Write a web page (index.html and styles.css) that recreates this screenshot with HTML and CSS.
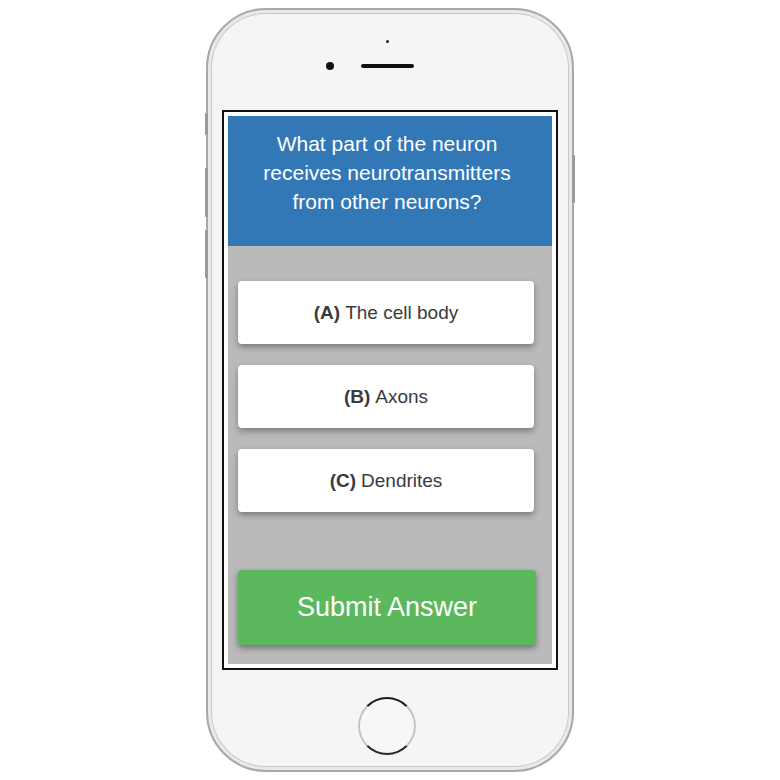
FILE: index.html
```html
<!DOCTYPE html>
<html>
<head>
<meta charset="utf-8">
<link rel="stylesheet" href="styles.css">
</head>
<body>
<div class="phone">
  <span class="side-btn l1"></span>
  <span class="side-btn l2"></span>
  <span class="side-btn l3"></span>
  <span class="side-btn r1"></span>
  <div class="top">
    <span class="sensor"></span>
    <div class="ear-row">
      <span class="camera"></span>
      <span class="speaker"></span>
    </div>
  </div>
  <div class="screen">
    <div class="app">
      <div class="question">What part of the neuron receives neurotransmitters from other neurons?</div>
      <div class="answers">
        <div class="options">
          <div class="option"><b>(A)</b> The cell body</div>
          <div class="option"><b>(B)</b> Axons</div>
          <div class="option"><b>(C)</b> Dendrites</div>
        </div>
        <div class="submit">Submit Answer</div>
      </div>
    </div>
  </div>
  <div class="home"></div>
</div>
</body>
</html>
```
FILE: styles.css
```css
html, body {
  margin: 0;
  padding: 0;
  background: #ffffff;
}
body {
  font-family: "Liberation Sans", Arial, sans-serif;
}
.phone {
  position: relative;
  box-sizing: border-box;
  width: 368px;
  height: 764px;
  margin: 8px auto 0;
  border: 2px solid #a8a8a8;
  border-radius: 60px;
  background: #f4f5f4;
  box-shadow: inset 0 0 0 3px #e9e9e9, inset 0 0 0 4px #c9c9c9;
  display: flex;
  flex-direction: column;
  align-items: center;
}
.side-btn {
  position: absolute;
  width: 3px;
  background: #9a9a9a;
  border-radius: 1px;
}
.l1 { left: -3px; top: 103px; height: 22px; }
.l2 { left: -3px; top: 158px; height: 49px; }
.l3 { left: -3px; top: 220px; height: 48px; }
.r1 { right: -3px; top: 145px; height: 48px; }
.top {
  height: 100px;
  width: 100%;
  display: flex;
  flex-direction: column;
  align-items: center;
}
.sensor {
  width: 3px;
  height: 3px;
  border-radius: 50%;
  background: #222;
  margin-top: 30px;
  margin-left: -6px;
}
.ear-row {
  display: flex;
  align-items: center;
  gap: 27px;
  margin-top: 19px;
  margin-left: -41px;
}
.camera {
  width: 8px;
  height: 8px;
  border-radius: 50%;
  background: #111;
}
.speaker {
  width: 53px;
  height: 4px;
  border-radius: 2px;
  background: #111;
}
.screen {
  box-sizing: border-box;
  width: 336px;
  height: 560px;
  border: 2px solid #111;
  padding: 4px;
  background: #ffffff;
}
.app {
  height: 100%;
  display: flex;
  flex-direction: column;
  background: #bababa;
}
.question {
  height: 130px;
  box-sizing: border-box;
  padding: 13px 27px 0 21px;
  background: #3278b6;
  color: #ffffff;
  font-size: 21px;
  line-height: 29px;
  text-align: center;
}
.answers {
  flex: 1;
  display: flex;
  flex-direction: column;
  padding: 35px 14px 19px 10px;
}
.options {
  display: flex;
  flex-direction: column;
  gap: 21px;
}
.option {
  height: 63px;
  width: 296px;
  display: flex;
  align-items: center;
  justify-content: center;
  background: #ffffff;
  border-radius: 4px;
  box-shadow: 0 3px 6px rgba(0, 0, 0, 0.35);
  color: #3a3a3a;
  font-size: 19px;
  gap: 5px;
}
.option b {
  font-weight: bold;
}
.submit {
  margin-top: auto;
  height: 75px;
  width: 298px;
  display: flex;
  align-items: center;
  justify-content: center;
  background: #5cb85c;
  border-radius: 4px;
  box-shadow: 0 3px 6px rgba(0, 0, 0, 0.4);
  color: #ffffff;
  font-size: 27px;
}
.home {
  box-sizing: border-box;
  width: 58px;
  height: 58px;
  margin-top: 27px;
  margin-left: -6px;
  border-radius: 50%;
  border: 2px solid #c4c4c4;
  border-top-color: #1c1c1c;
  border-bottom-color: #2a2a2a;
  background: #f6f7f6;
}
```
